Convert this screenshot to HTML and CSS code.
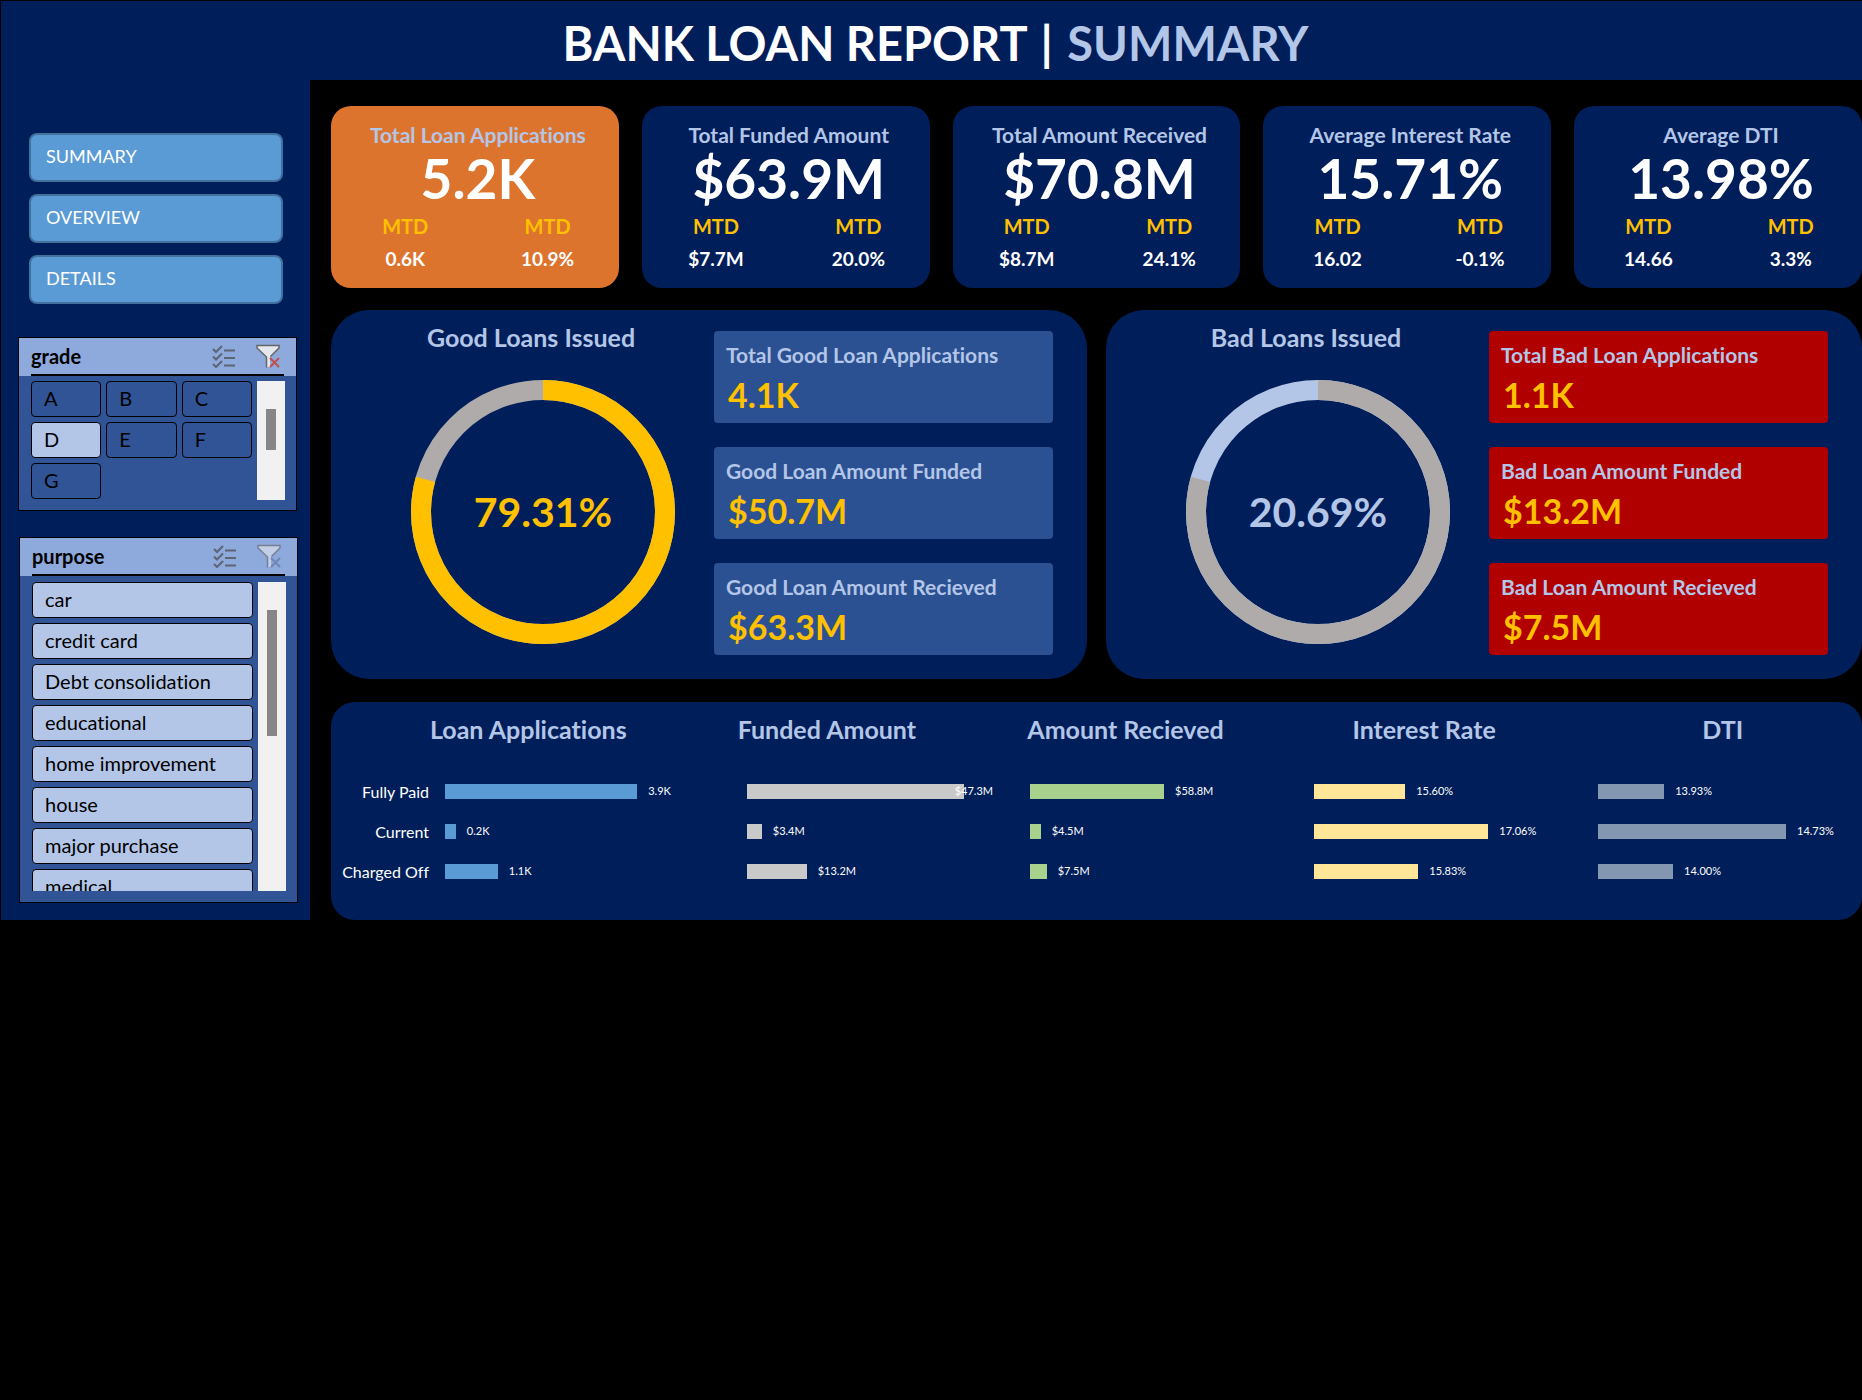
FILE: index.html
```html
<!DOCTYPE html>
<html lang="en">
<head>
<meta charset="utf-8">
<meta name="viewport" content="width=device-width, initial-scale=1">
<title>Bank Loan Report | Summary</title>
<link rel="stylesheet" href="styles.css">
</head>
<body>
<svg class="sprite" aria-hidden="true">
  <symbol id="icon-multi" viewBox="0 0 24 24">
    <g fill="none" stroke="#5d6573" stroke-width="2">
      <path d="M1 5l3 3 6-6M1 12.500l3 3 6-6M1 20l3 3 6-6"/>
      <path d="M12 6.500h11M12 14h11M12 21.500h11"/>
    </g>
  </symbol>
  <symbol id="icon-funnel" viewBox="0 0 24 24">
    <path d="M1 1.500h22v2.500l-9 9v10h-4v-10l-9-9z" fill="#e4e7ee"/>
    <path d="M10.500 23.500v-10.500l-9.500-9v-2.500h22v2.500l-8.500 8.500" fill="none" stroke="#666" stroke-width="1.500"/>
  </symbol>
</svg>

<header class="banner">
  <h1>BANK LOAN REPORT <span class="banner-divider">|</span> <span class="banner-page">SUMMARY</span></h1>
</header>

<div class="layout">
  <aside class="sidebar">
    <nav class="nav">
      <a href="#summary">SUMMARY</a>
      <a href="#overview">OVERVIEW</a>
      <a href="#details">DETAILS</a>
    </nav>

    <section class="slicer">
      <div class="slicer-head">
        <h2>grade</h2>
        <button class="icon-button" aria-label="Multi-select grade"><svg><use href="#icon-multi"/></svg></button>
        <button class="icon-button" aria-label="Clear grade filter"><svg viewBox="0 0 24 24"><use href="#icon-funnel"/><path d="M14 14l9 9M23 14l-9 9" stroke="#c0504d" stroke-width="2"/></svg></button>
      </div>
      <div class="slicer-body">
        <div class="slicer-items three">
          <button>A</button><button>B</button><button>C</button>
          <button class="selected">D</button><button>E</button><button>F</button>
          <button>G</button>
        </div>
        <div class="scrollbar"><div class="thumb"></div></div>
      </div>
    </section>

    <section class="slicer purpose">
      <div class="slicer-head">
        <h2>purpose</h2>
        <button class="icon-button" aria-label="Multi-select purpose"><svg><use href="#icon-multi"/></svg></button>
        <button class="icon-button inactive" aria-label="Clear purpose filter"><svg viewBox="0 0 24 24"><use href="#icon-funnel"/><path d="M14 14l9 9M23 14l-9 9" stroke="#5b7199" stroke-width="2"/></svg></button>
      </div>
      <div class="slicer-body">
        <div class="slicer-items">
          <button class="selected">car</button>
          <button class="selected">credit card</button>
          <button class="selected">Debt consolidation</button>
          <button class="selected">educational</button>
          <button class="selected">home improvement</button>
          <button class="selected">house</button>
          <button class="selected">major purchase</button>
          <button class="selected">medical</button>
        </div>
        <div class="scrollbar"><div class="thumb"></div></div>
      </div>
    </section>
  </aside>

  <main class="main">
    <section class="kpis">
      <article class="kpi active"><h2>Total Loan Applications</h2><p class="kpi-value">5.2K</p>
        <dl><div><dt>MTD</dt><dd>0.6K</dd></div><div><dt>MTD</dt><dd>10.9%</dd></div></dl></article>
      <article class="kpi"><h2>Total Funded Amount</h2><p class="kpi-value">$63.9M</p>
        <dl><div><dt>MTD</dt><dd>$7.7M</dd></div><div><dt>MTD</dt><dd>20.0%</dd></div></dl></article>
      <article class="kpi"><h2>Total Amount Received</h2><p class="kpi-value">$70.8M</p>
        <dl><div><dt>MTD</dt><dd>$8.7M</dd></div><div><dt>MTD</dt><dd>24.1%</dd></div></dl></article>
      <article class="kpi"><h2>Average Interest Rate</h2><p class="kpi-value">15.71%</p>
        <dl><div><dt>MTD</dt><dd>16.02</dd></div><div><dt>MTD</dt><dd>-0.1%</dd></div></dl></article>
      <article class="kpi"><h2>Average DTI</h2><p class="kpi-value">13.98%</p>
        <dl><div><dt>MTD</dt><dd>14.66</dd></div><div><dt>MTD</dt><dd>3.3%</dd></div></dl></article>
    </section>

    <section class="loans">
      <article class="loan-panel good">
        <div class="issued">
          <h2>Good Loans Issued</h2>
          <div class="donut">
            <svg viewBox="0 0 264 264" aria-hidden="true">
              <circle class="ring rest" cx="132" cy="132" r="122"/>
              <circle class="ring share" cx="132" cy="132" r="122" pathLength="100" stroke-dasharray="79.310 20.690" transform="rotate(-90 132 132)"/>
            </svg>
            <p>79.31%</p>
          </div>
        </div>
        <ul class="stats">
          <li><h3>Total Good Loan Applications</h3><p>4.1K</p></li>
          <li><h3>Good Loan Amount Funded</h3><p>$50.7M</p></li>
          <li><h3>Good Loan Amount Recieved</h3><p>$63.3M</p></li>
        </ul>
      </article>
      <article class="loan-panel bad">
        <div class="issued">
          <h2>Bad Loans Issued</h2>
          <div class="donut">
            <svg viewBox="0 0 264 264" aria-hidden="true">
              <circle class="ring share" cx="132" cy="132" r="122"/>
              <circle class="ring rest" cx="132" cy="132" r="122" pathLength="100" stroke-dasharray="79.310 20.690" transform="rotate(-90 132 132)"/>
            </svg>
            <p>20.69%</p>
          </div>
        </div>
        <ul class="stats">
          <li><h3>Total Bad Loan Applications</h3><p>1.1K</p></li>
          <li><h3>Bad Loan Amount Funded</h3><p>$13.2M</p></li>
          <li><h3>Bad Loan Amount Recieved</h3><p>$7.5M</p></li>
        </ul>
      </article>
    </section>

    <section class="status">
      <div class="status-titles">
        <h2>Loan Applications</h2><h2>Funded Amount</h2><h2>Amount Recieved</h2><h2>Interest Rate</h2><h2>DTI</h2>
      </div>
      <div class="status-row">
        <h3>Fully Paid</h3>
        <div class="cell apps"><div class="bar" style="width:63.7%"></div><span>3.9K</span></div>
        <div class="cell funded overlap"><div class="bar" style="width:76.7%"></div><span>$47.3M</span></div>
        <div class="cell received"><div class="bar" style="width:47.2%"></div><span>$58.8M</span></div>
        <div class="cell rate"><div class="bar" style="width:32%"></div><span>15.60%</span></div>
        <div class="cell dti"><div class="bar" style="width:25%"></div><span>13.93%</span></div>
      </div>
      <div class="status-row">
        <h3>Current</h3>
        <div class="cell apps"><div class="bar" style="width:3.6%"></div><span>0.2K</span></div>
        <div class="cell funded"><div class="bar" style="width:5.3%"></div><span>$3.4M</span></div>
        <div class="cell received"><div class="bar" style="width:3.9%"></div><span>$4.5M</span></div>
        <div class="cell rate"><div class="bar" style="width:61.3%"></div><span>17.06%</span></div>
        <div class="cell dti"><div class="bar" style="width:71.2%"></div><span>14.73%</span></div>
      </div>
      <div class="status-row">
        <h3>Charged Off</h3>
        <div class="cell apps"><div class="bar" style="width:17.5%"></div><span>1.1K</span></div>
        <div class="cell funded"><div class="bar" style="width:21.2%"></div><span>$13.2M</span></div>
        <div class="cell received"><div class="bar" style="width:6%"></div><span>$7.5M</span></div>
        <div class="cell rate"><div class="bar" style="width:36.6%"></div><span>15.83%</span></div>
        <div class="cell dti"><div class="bar" style="width:28.4%"></div><span>14.00%</span></div>
      </div>
    </section>
  </main>
</div>
</body>
</html>
```
FILE: styles.css
```css
:root {
  --navy: #001e5a;
  --pale: #b4c6e7;
  --gold: #ffc000;
  --grey: #afabab;
}
* { box-sizing: border-box; margin: 0; padding: 0; }
body {
  background: #000;
  color: #fff;
  font-family: Lato, "Open Sans", sans-serif;
  font-variant-ligatures: none;
  padding: 1px 0 0 1px;
}
button { font: inherit; font-variant-ligatures: none; color: inherit; }
.sprite { display: none; }

.banner {
  background: var(--navy);
  height: 79px;
  display: flex;
  align-items: center;
  justify-content: center;
  padding: 4px 0 0 8px;
}
.banner h1 { font-size: 47px; line-height: 56px; font-weight: 700; }
.banner-divider { margin: 0 3px; }
.banner-page { color: var(--pale); }

.layout { display: grid; grid-template-columns: 309px minmax(0, 1fr); }
.sidebar { background: var(--navy); padding: 53px 13px 16px 17px; }
.main { padding: 26px 0 0 21px; }

.nav { display: grid; gap: 12px; margin: 0 14px 33px 11px; }
.nav a {
  display: block;
  height: 49px;
  padding: 0 15px;
  border: 2px solid #41719c;
  border-radius: 8px;
  background: #5b9bd5;
  color: #fff;
  font-size: 18px;
  line-height: 43px;
  text-decoration: none;
}

.slicer { border: 1px solid #000; background: #305496; color: #000; font-size: 20px; }
.slicer.purpose { margin: 26px -1px 0 1px; }
.slicer-head {
  height: 38px;
  display: flex;
  align-items: center;
  gap: 20px;
  padding: 0 16px 2px 12px;
  background: #8ea9db;
}
.slicer-head h2 { flex: 1; font-size: 20px; line-height: 24px; }
.icon-button { width: 24px; height: 24px; border: 0; background: none; }
.icon-button svg { display: block; width: 24px; height: 24px; }
.icon-button.inactive { opacity: 0.6; }
.slicer-body {
  display: flex;
  gap: 5px;
  height: 134px;
  padding: 5px 11px 10px 0;
  margin-left: 12px;
  position: relative;
}
.slicer-body::before {
  content: "";
  position: absolute;
  inset: -2px 12px auto 0;
  border-top: 2px solid #000;
}
.purpose .slicer-body { height: 326px; padding: 6px 11px 11px 0; }
.slicer-items { flex: 1; display: grid; grid-auto-rows: 36px; gap: 5px; overflow: hidden; }
.slicer-items.three { grid-template-columns: repeat(3, 1fr); }
.slicer-items button {
  border: 1px solid #000;
  border-radius: 4px;
  background: #305496;
  padding: 0 12px 2px;
  line-height: 30px;
  text-align: left;
}
.slicer-items .selected { background: var(--pale); }
.scrollbar { width: 28px; background: #f1f1f1; padding-top: 28px; }
.thumb { width: 10px; height: 41px; margin: 0 auto; background: #868686; }
.purpose .thumb { height: 126px; }

h2, h3, dt, dd { font-weight: 700; }

.kpis { display: grid; grid-template-columns: repeat(5, minmax(0, 1fr)); gap: 23px; text-align: center; }
.kpi { background: var(--navy); border-radius: 20px; height: 182px; padding-top: 17px; }
.kpi.active { background: #dd742d; }
.kpi h2 { color: var(--pale); font-size: 21px; line-height: 24px; padding-left: 6px; }
.kpi-value { font-size: 55px; line-height: 62px; font-weight: 700; padding-left: 6px; }
.kpi dl { display: grid; grid-template-columns: 1fr 1fr; padding: 1px 0 0 3px; }
.kpi dt { color: var(--gold); font-size: 20px; line-height: 32px; }
.kpi dd { font-size: 19px; line-height: 34px; }

.loans { display: grid; grid-template-columns: 1fr 1fr; gap: 19px; margin-top: 22px; }
.loan-panel {
  background: var(--navy);
  border-radius: 38px;
  height: 369px;
  display: flex;
  justify-content: space-between;
  padding: 21px 34px 0 80px;
}
.issued { width: 264px; }
.issued h2 { color: var(--pale); font-size: 25px; line-height: 28px; text-align: center; margin: -8px 24px 0 0; white-space: nowrap; }
.donut { display: grid; place-items: center; margin-top: 29px; }
.donut > * { grid-area: 1 / 1; }
.donut svg { display: block; width: 264px; height: 264px; }
.donut p { font-size: 41px; line-height: 48px; font-weight: 700; }
.ring { fill: none; stroke-width: 20; }
.rest { stroke: var(--grey); }
.good .share { stroke: var(--gold); }
.bad .share { stroke: var(--pale); }
.good .donut p { color: var(--gold); }
.bad .donut p { color: var(--pale); }

.stats { list-style: none; width: 339px; display: grid; gap: 24px; align-content: start; }
.stats li { height: 92px; border-radius: 4px; padding: 12px 12px 0; background: #2b5192; }
.bad .stats li { background: #b00000; }
.stats h3 { color: var(--pale); font-size: 21px; line-height: 24px; white-space: nowrap; }
.stats p { color: var(--gold); font-size: 34px; line-height: 40px; font-weight: 700; padding: 8px 0 0 2px; }

.status { background: var(--navy); border-radius: 24px; height: 218px; margin-top: 23px; padding-top: 13px; }
.status-titles {
  display: grid;
  grid-template-columns: repeat(5, 1fr);
  margin: 0 -10px 28px 48px;
  color: var(--pale);
  text-align: center;
}
.status-titles h2 { font-size: 25px; line-height: 28px; }
.status-row {
  display: grid;
  grid-template-columns: 98px 302fr 283fr 285fr 284fr 280fr;
  height: 40px;
  align-items: center;
}
.status-row h3 { font-size: 16px; font-weight: 400; text-align: right; white-space: nowrap; }
.cell { display: flex; align-items: center; gap: 11px; font-size: 11px; line-height: 14px; margin-left: 16px; margin-right: -16px; }
.cell:last-child { margin-right: 0; }
.bar { flex: none; height: 15px; }
.overlap span { margin-left: -20px; }
.apps .bar { background: #5b9bd5; }
.funded .bar { background: #c9c9c9; }
.received .bar { background: #a9d18e; }
.rate .bar { background: #ffe699; }
.dti .bar { background: #8497b0; }
```
